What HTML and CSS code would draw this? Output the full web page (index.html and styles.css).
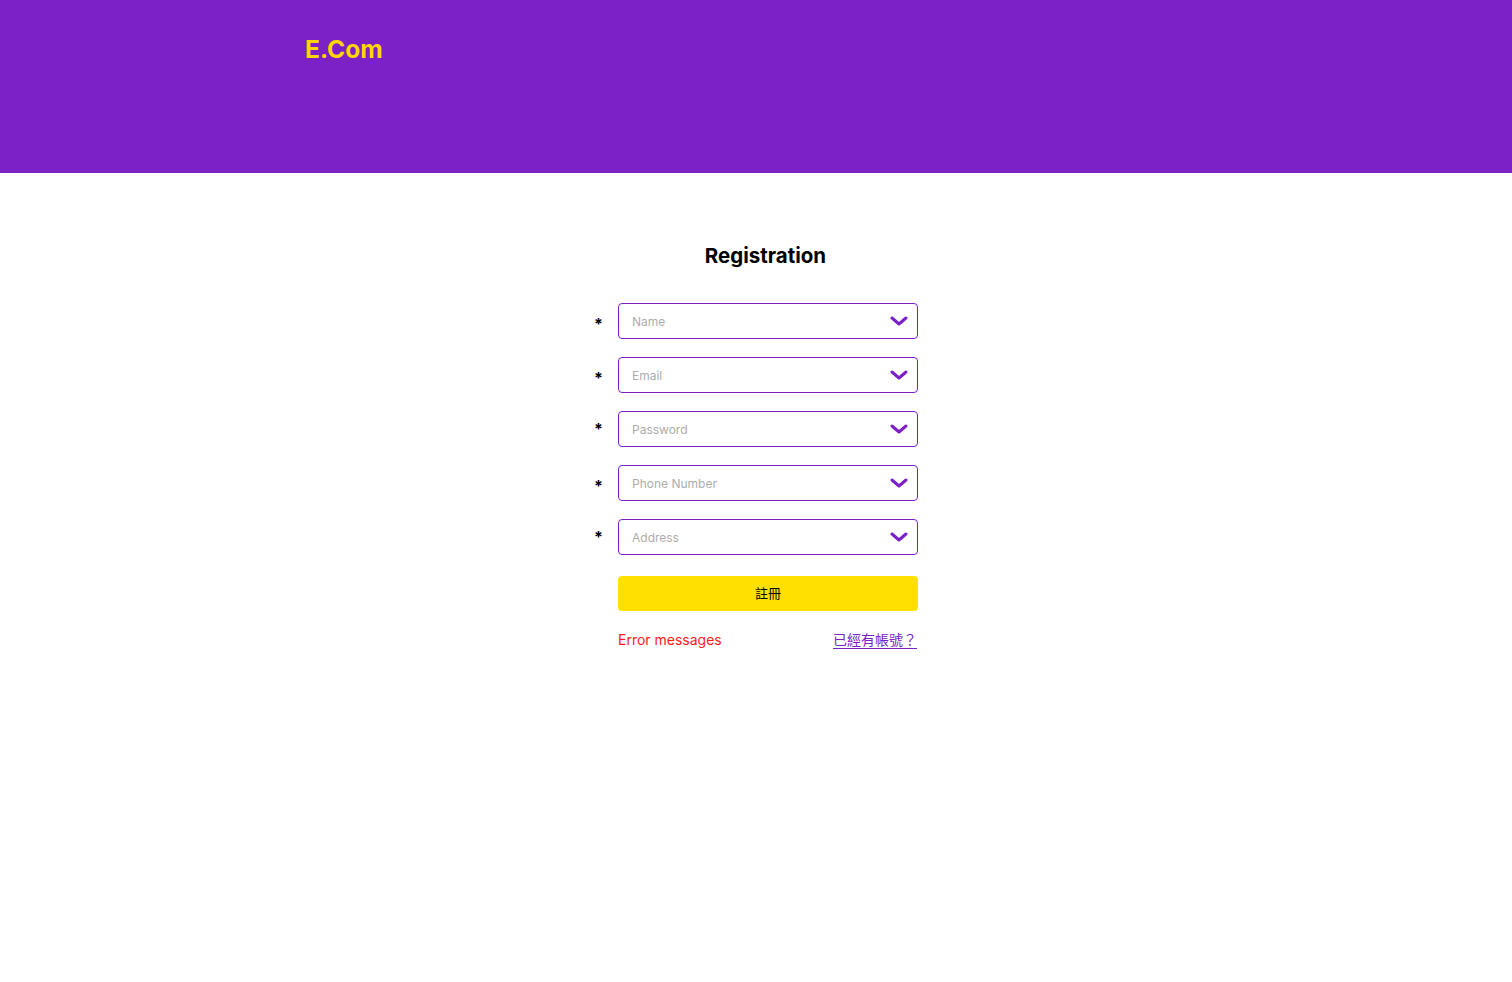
FILE: index.html
```html
<!DOCTYPE html>
<html lang="zh-Hant">
<head>
<meta charset="utf-8">
<title>E.Com Registration</title>
<link rel="stylesheet" href="styles.css">
</head>
<body>
<header class="topbar">
  <div class="logo">E.Com</div>
</header>
<main class="content">
  <h1 class="title">Registration</h1>
  <form class="form">
    <div class="row">
      <span class="req">*</span>
      <div class="field"><span class="ph">Name</span>
        <svg class="chev" viewBox="0 0 18 10" width="18" height="10"><path d="M2 2l7 6 7-6" fill="none" stroke="#7B21C5" stroke-width="3" stroke-linecap="round" stroke-linejoin="round"/></svg></div>
    </div>
    <div class="row">
      <span class="req">*</span>
      <div class="field"><span class="ph">Email</span>
        <svg class="chev" viewBox="0 0 18 10" width="18" height="10"><path d="M2 2l7 6 7-6" fill="none" stroke="#7B21C5" stroke-width="3" stroke-linecap="round" stroke-linejoin="round"/></svg></div>
    </div>
    <div class="row">
      <span class="req req-up">*</span>
      <div class="field"><span class="ph">Password</span>
        <svg class="chev" viewBox="0 0 18 10" width="18" height="10"><path d="M2 2l7 6 7-6" fill="none" stroke="#7B21C5" stroke-width="3" stroke-linecap="round" stroke-linejoin="round"/></svg></div>
    </div>
    <div class="row">
      <span class="req">*</span>
      <div class="field"><span class="ph">Phone Number</span>
        <svg class="chev" viewBox="0 0 18 10" width="18" height="10"><path d="M2 2l7 6 7-6" fill="none" stroke="#7B21C5" stroke-width="3" stroke-linecap="round" stroke-linejoin="round"/></svg></div>
    </div>
    <div class="row">
      <span class="req req-up">*</span>
      <div class="field"><span class="ph">Address</span>
        <svg class="chev" viewBox="0 0 18 10" width="18" height="10"><path d="M2 2l7 6 7-6" fill="none" stroke="#7B21C5" stroke-width="3" stroke-linecap="round" stroke-linejoin="round"/></svg></div>
    </div>
    <div class="row row-btn">
      <span class="req"></span>
      <button type="button" class="submit">註冊</button>
    </div>
    <div class="row row-foot">
      <span class="req"></span>
      <div class="foot">
        <span class="error">Error messages</span>
        <a class="login" href="#">已經有帳號？</a>
      </div>
    </div>
  </form>
</main>
</body>
</html>
```
FILE: styles.css
```css
* { box-sizing: border-box; }
body {
  margin: 0;
  font-family: Inter, "Noto Sans CJK TC", sans-serif;
  background: #fff;
  color: #000;
}
.topbar {
  height: 173px;
  background: #7B21C5;
  padding: 35px 0 0 305px;
}
.logo {
  color: #FFD600;
  font-weight: 700;
  font-size: 24.6px;
  line-height: 28px;
}
.content {
  display: flex;
  flex-direction: column;
  align-items: center;
  padding-top: 71px;
}
.title {
  margin: 0;
  font-size: 20.5px;
  line-height: 24px;
  font-weight: 700;
  padding-left: 19px;
}
.form {
  margin-top: 35px;
  display: flex;
  flex-direction: column;
  gap: 18px;
}
.row {
  display: flex;
  align-items: center;
}
.req {
  width: 24px;
  font-size: 16px;
  font-weight: 700;
  line-height: 14px;
  padding-top: 6px;
}
.req-up { padding-top: 0; }
.field {
  width: 300px;
  height: 36px;
  border: 1px solid #7B21C5;
  border-radius: 4px;
  display: flex;
  align-items: center;
  justify-content: space-between;
  padding: 0 9px 0 13px;
}
.ph {
  font-size: 12px;
  color: #ACACAC;
}
.chev { display: block; }
.row-btn { margin-top: 3px; }
.submit {
  width: 300px;
  height: 35px;
  border: none;
  border-radius: 4px;
  background: #FFE000;
  font-family: Inter, "Noto Sans CJK TC", sans-serif;
  font-size: 13px;
  line-height: 16px;
  color: #000;
  padding: 0 0 1px;
}
.row-foot { margin-top: 1px; }
.foot {
  width: 300px;
  display: flex;
  justify-content: space-between;
  align-items: center;
  font-size: 14px;
  line-height: 20px;
}
.error { color: #FF1A1A; }
.login {
  color: #7B21C5;
  text-decoration: underline;
  text-underline-offset: 3px;
  padding-right: 1px;
}
```
